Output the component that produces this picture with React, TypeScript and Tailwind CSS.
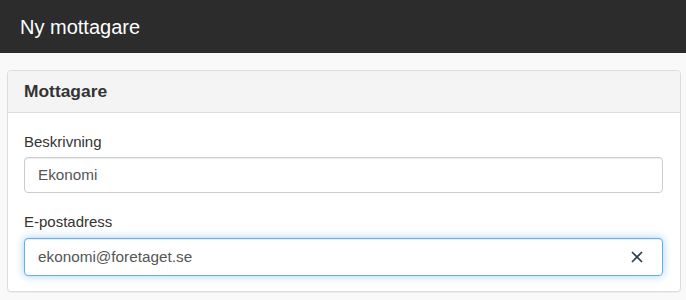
import { X } from "lucide-react";

/* ================= Field ================= */

function Field({
  label,
  value,
  focused,
}: {
  label: string;
  value: string;
  focused?: boolean;
}) {
  return (
    <div className="flex flex-col">
      <label
        className={`text-[15px] leading-[21px] text-[#333] ${
          focused ? "mb-[6px]" : "mb-[5px]"
        }`}
      >
        {label}
      </label>
      <div
        className={`flex items-center rounded-[4px] border bg-white px-[13px] ${
          focused
            ? "h-[38px] border-[#66afe9] shadow-[inset_0_1px_1px_rgba(0,0,0,0.075),0_0_8px_rgba(102,175,233,0.6)]"
            : "h-[36px] border-[#ccc] shadow-[inset_0_1px_1px_rgba(0,0,0,0.075)]"
        }`}
      >
        <span className="flex-1 text-[15.3px] text-[#555]">{value}</span>
        {focused && (
          <X className="w-[18px] h-[18px] text-[#2c3e50] mr-[3px]" strokeWidth={2.3} />
        )}
      </div>
    </div>
  );
}

/* ================= Main ================= */

export default function App() {
  return (
    <div
      className="min-h-[300px] bg-[#f9f9f9]"
      style={{ fontFamily: '"Liberation Sans", Arial, sans-serif' }}
    >
      {/* Top bar */}
      <header className="h-[53px] bg-[#2c2c2c] flex items-center px-[20px]">
        <h1 className="text-[20px] text-white">Ny mottagare</h1>
      </header>

      {/* Card */}
      <div className="ml-[7px] mt-[17px] w-[674px] rounded-[4px] border border-[#ddd] bg-white shadow-[0_1px_1px_rgba(0,0,0,0.05)]">
        <div className="h-[42px] flex items-center px-4 bg-[#f4f4f4] border-b border-[#ddd] rounded-t-[4px]">
          <h2 className="text-[17.4px] font-bold text-[#333]">Mottagare</h2>
        </div>

        <div className="pt-[18px] pb-[15px] pl-4 pr-[17px] flex flex-col gap-[18px]">
          <Field label="Beskrivning" value="Ekonomi" />
          <Field label="E-postadress" value="ekonomi@foretaget.se" focused />
        </div>
      </div>
    </div>
  );
}
